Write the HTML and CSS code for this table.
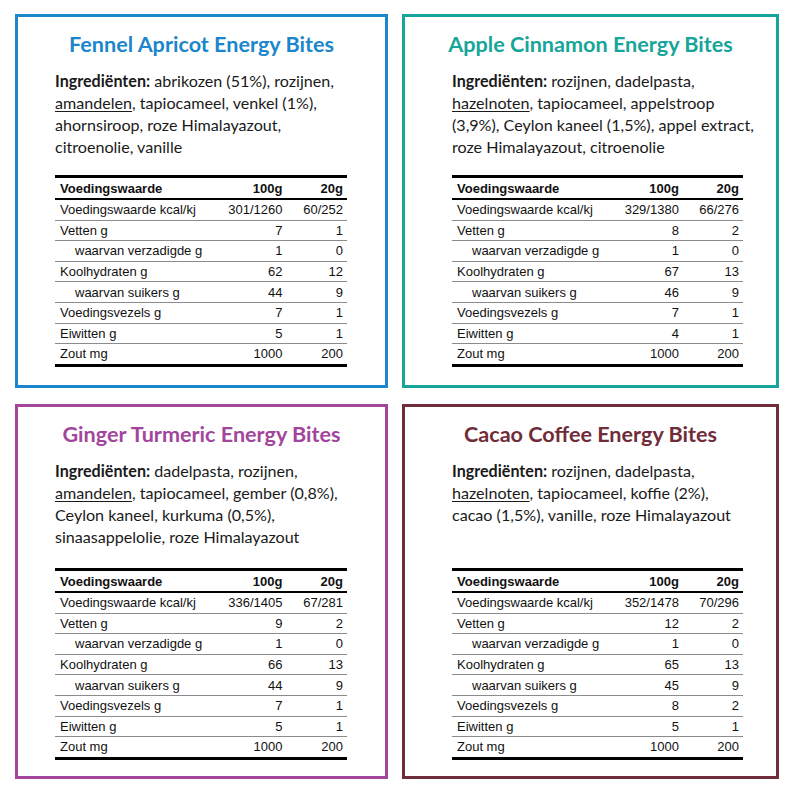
FILE: index.html
```html
<!DOCTYPE html>
<html lang="nl">
<head>
<meta charset="utf-8">
<title>Energy Bites</title>
<link rel="stylesheet" href="styles.css">
</head>
<body>
<main class="grid">
  <section class="card card-blue">
    <h2 class="title">Fennel Apricot Energy Bites</h2>
    <div class="body body-left">
      <p class="ingr"><b>Ingrediënten:</b> abrikozen (51%), rozijnen,<br><u>amandelen</u>, tapiocameel, venkel (1%),<br>ahornsiroop, roze Himalayazout,<br>citroenolie, vanille</p>
      <table class="nut">
        <thead><tr><th>Voedingswaarde</th><th>100g</th><th>20g</th></tr></thead>
        <tbody>
          <tr><td>Voedingswaarde kcal/kj</td><td>301/1260</td><td>60/252</td></tr>
          <tr><td>Vetten g</td><td>7</td><td>1</td></tr>
          <tr><td class="sub">waarvan verzadigde g</td><td>1</td><td>0</td></tr>
          <tr><td>Koolhydraten g</td><td>62</td><td>12</td></tr>
          <tr><td class="sub">waarvan suikers g</td><td>44</td><td>9</td></tr>
          <tr><td>Voedingsvezels g</td><td>7</td><td>1</td></tr>
          <tr><td>Eiwitten g</td><td>5</td><td>1</td></tr>
          <tr><td>Zout mg</td><td>1000</td><td>200</td></tr>
        </tbody>
      </table>
    </div>
  </section>
  <section class="card card-teal">
    <h2 class="title">Apple Cinnamon Energy Bites</h2>
    <div class="body body-right">
      <p class="ingr"><b>Ingrediënten:</b> rozijnen, dadelpasta,<br><u>hazelnoten</u>, tapiocameel, appelstroop<br>(3,9%), Ceylon kaneel (1,5%), appel extract,<br>roze Himalayazout, citroenolie</p>
      <table class="nut">
        <thead><tr><th>Voedingswaarde</th><th>100g</th><th>20g</th></tr></thead>
        <tbody>
          <tr><td>Voedingswaarde kcal/kj</td><td>329/1380</td><td>66/276</td></tr>
          <tr><td>Vetten g</td><td>8</td><td>2</td></tr>
          <tr><td class="sub">waarvan verzadigde g</td><td>1</td><td>0</td></tr>
          <tr><td>Koolhydraten g</td><td>67</td><td>13</td></tr>
          <tr><td class="sub">waarvan suikers g</td><td>46</td><td>9</td></tr>
          <tr><td>Voedingsvezels g</td><td>7</td><td>1</td></tr>
          <tr><td>Eiwitten g</td><td>4</td><td>1</td></tr>
          <tr><td>Zout mg</td><td>1000</td><td>200</td></tr>
        </tbody>
      </table>
    </div>
  </section>
  <section class="card card-purple">
    <h2 class="title">Ginger Turmeric Energy Bites</h2>
    <div class="body body-left">
      <p class="ingr ingr-low"><b>Ingrediënten:</b> dadelpasta, rozijnen,<br><u>amandelen</u>, tapiocameel, gember (0,8%),<br>Ceylon kaneel, kurkuma (0,5%),<br>sinaasappelolie, roze Himalayazout</p>
      <table class="nut">
        <thead><tr><th>Voedingswaarde</th><th>100g</th><th>20g</th></tr></thead>
        <tbody>
          <tr><td>Voedingswaarde kcal/kj</td><td>336/1405</td><td>67/281</td></tr>
          <tr><td>Vetten g</td><td>9</td><td>2</td></tr>
          <tr><td class="sub">waarvan verzadigde g</td><td>1</td><td>0</td></tr>
          <tr><td>Koolhydraten g</td><td>66</td><td>13</td></tr>
          <tr><td class="sub">waarvan suikers g</td><td>44</td><td>9</td></tr>
          <tr><td>Voedingsvezels g</td><td>7</td><td>1</td></tr>
          <tr><td>Eiwitten g</td><td>5</td><td>1</td></tr>
          <tr><td>Zout mg</td><td>1000</td><td>200</td></tr>
        </tbody>
      </table>
    </div>
  </section>
  <section class="card card-maroon">
    <h2 class="title">Cacao Coffee Energy Bites</h2>
    <div class="body body-right">
      <p class="ingr ingr-low"><b>Ingrediënten:</b> rozijnen, dadelpasta,<br><u>hazelnoten</u>, tapiocameel, koffie (2%),<br>cacao (1,5%), vanille, roze Himalayazout</p>
      <table class="nut">
        <thead><tr><th>Voedingswaarde</th><th>100g</th><th>20g</th></tr></thead>
        <tbody>
          <tr><td>Voedingswaarde kcal/kj</td><td>352/1478</td><td>70/296</td></tr>
          <tr><td>Vetten g</td><td>12</td><td>2</td></tr>
          <tr><td class="sub">waarvan verzadigde g</td><td>1</td><td>0</td></tr>
          <tr><td>Koolhydraten g</td><td>65</td><td>13</td></tr>
          <tr><td class="sub">waarvan suikers g</td><td>45</td><td>9</td></tr>
          <tr><td>Voedingsvezels g</td><td>8</td><td>2</td></tr>
          <tr><td>Eiwitten g</td><td>5</td><td>1</td></tr>
          <tr><td>Zout mg</td><td>1000</td><td>200</td></tr>
        </tbody>
      </table>
    </div>
  </section>
</main>
</body>
</html>
```

FILE: styles.css
```css
html, body {
  margin: 0;
  padding: 0;
  background: #ffffff;
}

.grid {
  display: grid;
  grid-template-columns: 373px 377px;
  grid-template-rows: 374px 375px;
  column-gap: 14px;
  row-gap: 16px;
  padding: 14px 0 0 15px;
}

.card {
  box-sizing: border-box;
  border: 3px solid;
  padding-top: 15px;
  background: #fff;
}

.card-blue { border-color: #1b86cb; }
.card-blue .title { color: #1b86cb; }
.card-teal { border-color: #16a59a; }
.card-teal .title { color: #16a59a; }
.card-purple { border-color: #a2469d; }
.card-purple .title { color: #a2469d; }
.card-maroon { border-color: #702d39; }
.card-maroon .title { color: #702d39; }

.title {
  margin: 0;
  font-family: Lato, "Open Sans", sans-serif;
  font-weight: 700;
  font-size: 21.6px;
  line-height: 24px;
  text-align: center;
}

.body {
  width: 292px;
  margin-top: 14px;
}
.body-left { margin-left: 37px; }
.body-right { margin-left: 47px; width: 291px; }

.ingr {
  margin: 0;
  height: 105px;
  font-family: Lato, "Open Sans", sans-serif;
  font-size: 16.1px;
  line-height: 22px;
  color: #1a1a1a;
  white-space: nowrap;
}
.ingr-low { height: 108px; }
.ingr b { font-weight: 700; }
.ingr u { text-underline-offset: 2px; }

.nut {
  width: 100%;
  border-collapse: collapse;
  font-family: "Liberation Sans", Arial, sans-serif;
  font-size: 13px;
  color: #111;
  border-top: 3px solid #000;
  border-bottom: 3px solid #000;
}

.nut th, .nut td {
  padding: 0 4px 0 5px;
  height: 20px;
  line-height: 15px;
  text-align: right;
  white-space: nowrap;
}

.nut th {
  font-weight: 700;
  border-bottom: 2px solid #000;
}

.nut th:first-child, .nut td:first-child { text-align: left; }
.nut th:nth-child(2), .nut td:nth-child(2) { width: 72px; }
.nut th:nth-child(3), .nut td:nth-child(3) { width: 52px; }

.nut tbody td {
  border-top: 1px solid #8c8c8c;
  height: 19.6px;
}
.nut tbody tr:first-child td { border-top: none; }

.nut td.sub { padding-left: 20px; }
```
